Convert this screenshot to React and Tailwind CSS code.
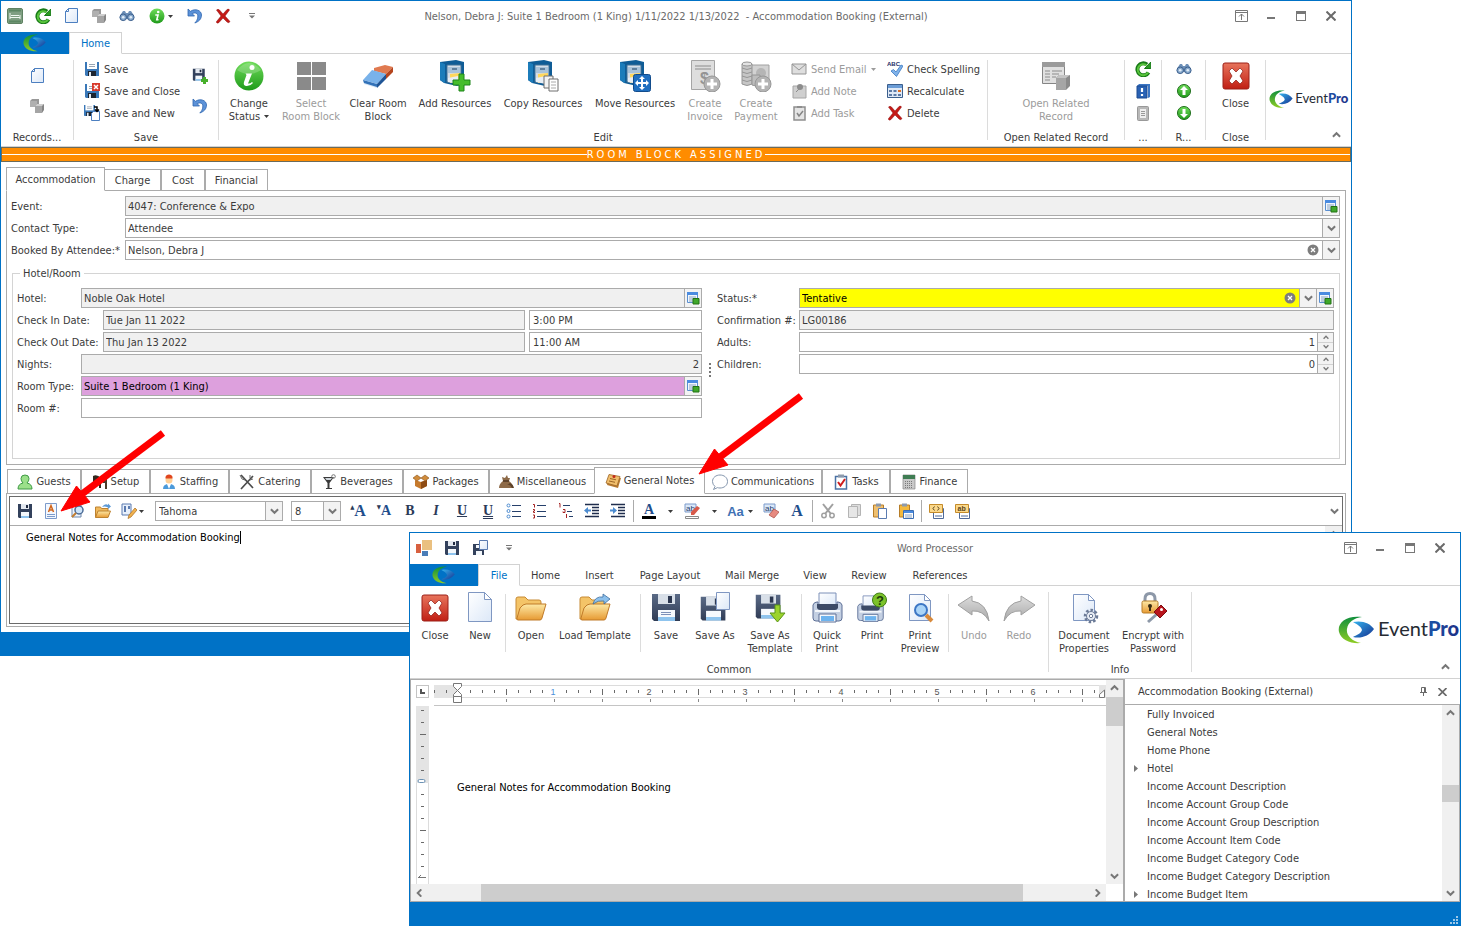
import clsx from 'clsx';

// Shared gradients, referenced by the icons below
const Defs = () => (
  <svg width="0" height="0" className="absolute" aria-hidden="true">
    <defs>
      <linearGradient id="gBlue" x1="0" y1="0" x2="1" y2="1">
        <stop offset="0" stopColor="#5fa3e0" />
        <stop offset="1" stopColor="#14508f" />
      </linearGradient>
      <linearGradient id="gGreen" x1="0" y1="0" x2="0" y2="1">
        <stop offset="0" stopColor="#6fdc5a" />
        <stop offset="1" stopColor="#1f9a1a" />
      </linearGradient>
      <linearGradient id="gRed" x1="0" y1="0" x2="0" y2="1">
        <stop offset="0" stopColor="#e8745c" />
        <stop offset="1" stopColor="#c01f14" />
      </linearGradient>
      <linearGradient id="gPage" x1="0" y1="0" x2="1" y2="1">
        <stop offset="0" stopColor="#ffffff" />
        <stop offset="1" stopColor="#dce8f8" />
      </linearGradient>
      <linearGradient id="gFolder" x1="0" y1="0" x2="0" y2="1">
        <stop offset="0" stopColor="#fde9a6" />
        <stop offset="1" stopColor="#e79a33" />
      </linearGradient>
      <linearGradient id="gDark" x1="0" y1="0" x2="0" y2="1">
        <stop offset="0" stopColor="#5a6a86" />
        <stop offset="1" stopColor="#303c55" />
      </linearGradient>
      <linearGradient id="gGray" x1="0" y1="0" x2="0" y2="1">
        <stop offset="0" stopColor="#dcdcdc" />
        <stop offset="1" stopColor="#a8a8a8" />
      </linearGradient>
      <linearGradient id="gSwoosh" x1="0" y1="0" x2="0" y2="1">
        <stop offset="0" stopColor="#0f8f3c" />
        <stop offset="1" stopColor="#8fcc24" />
      </linearGradient>
      <linearGradient id="gEye" x1="0" y1="0" x2="1" y2="1">
        <stop offset="0" stopColor="#35b3ee" />
        <stop offset="1" stopColor="#15308f" />
      </linearGradient>
      <linearGradient id="gPro" x1="0" y1="0" x2="1" y2="0">
        <stop offset="0" stopColor="#1f8fdc" />
        <stop offset="1" stopColor="#1c2f86" />
      </linearGradient>
    </defs>
  </svg>
);

const Svg = ({ size = 16, box = 16, children }) => (
  <svg width={size} height={size} viewBox={`0 0 ${box} ${box}`} fill="none" className="shrink-0" aria-hidden="true">
    {children}
  </svg>
);

const cabinet = (
  <>
    <path d="M1 2l16-2 8 2v22l-7 2L5 23 1 20z" fill="#0f5c96" />
    <path d="M1 2l5 2v19l-5-3z" fill="#1c7cba" />
    <path d="M8 5h14v19l-14-2z" fill="#d5dde6" stroke="#3c6f96" />
    <path d="M9 7h12v6H9z" fill="#a9c3da" />
    <path d="M13 8h5v2h-5z" fill="#5f7f9c" />
    <path d="M11 14l10-1v8l-10 2z" fill="#ffd75c" />
    <path d="M9 18l10-2v8l-10-2z" fill="#e8eef5" />
  </>
);

const disk = (
  <>
    <path d="M2 2h28v27H4l-2-2z" fill="url(#gDark)" />
    <path d="M8 2h17v10H8z" fill="#d8dfe8" />
    <path d="M18 4h4v7h-4z" fill="#2c3750" />
    <path d="M8 18h17v11H8z" fill="#f6f9fd" />
    <path d="M8 25h17v4H8z" fill="#8fc4ee" />
  </>
);

const disk16 = (
  <>
    <path d="M1 1h14v14H2l-1-1z" fill="#33415c" />
    <path d="M4 1h8v5H4z" fill="#e3e8ef" />
    <path d="M9 2h2v3H9z" fill="#202a40" />
    <path d="M4 9h8v6H4z" fill="#f4f8fc" />
    <path d="M4 13h8v2H4z" fill="#8fc4ee" />
  </>
);

const blueDisk = (
  <>
    <path d="M1 1h14v14H2l-1-1z" fill="#3a78b8" />
    <path d="M3 1h10v7H3z" fill="#fff" />
    <path d="M5 3.500h6M5 5.500h6" stroke="#9aa6b4" />
    <path d="M4 10h8v5H4z" fill="#1d2530" />
    <path d="M5 11h2v4H5z" fill="#e3eaf2" />
  </>
);

const printer = (
  <>
    <path d="M8 1h17v13H8z" fill="url(#gPage)" stroke="#7c90b8" />
    <path d="M2 13q1-3 4-3h1v4h19v-4h1q3 0 4 3v13q0 3-3 3H5q-3 0-3-3z" fill="#c3cfe2" stroke="#5c6f96" />
    <path d="M6 12h21v4q-1 2-3 2H9q-2 0-3-2z" fill="#3c4a66" />
    <path d="M4 19h25" stroke="#f4f7fb" strokeWidth="2" />
    <path d="M8 22h17v8H8z" fill="#f3f7fc" stroke="#5c6f96" />
    <path d="M10 24h13v5H10z" fill="#6db3ee" />
  </>
);

const folder32 = (
  <>
    <path d="M1 7q0-2 2-2h7l3 3h11q2 0 2 2v17H1z" fill="#f4c468" stroke="#c78a34" />
    <path d="M8 13l3-1h20l-4 14q-.5 2-2 2H3q-1.500 0-1-2l3-10z" fill="url(#gFolder)" stroke="#c07a28" />
  </>
);

const invoiceBadge = (
  <>
    <circle cx="23" cy="24" r="8" fill="#b4b4b4" stroke="#989898" />
    <path d="M23 19v10M18 24h10" stroke="#fff" strokeWidth="3" />
  </>
);

const ICONS = {
  rooms: (
    <>
      <rect x=".5" y=".5" width="15" height="15" rx="1.500" fill="#7f9f82" stroke="#5f8263" />
      <path d="M2 2.500h12M2 13.500h12" stroke="#5c8763" strokeWidth="2" />
      <path d="M3 5v6M3 9.500h10M13 7v4M4 7.500h8" stroke="#f0f8f0" />
    </>
  ),
  refresh: (
    <>
      <path d="M13.500 11.500A6 6 0 1 1 12 3.500" stroke="#177a17" strokeWidth="4" />
      <path d="M13 11.500A5.500 5.500 0 1 1 11.500 4.300" stroke="#58c33c" strokeWidth="2" />
      <path d="M9.500 7.500h6.300V1z" fill="#2b9a22" stroke="#177a17" />
    </>
  ),
  page: (
    <>
      <path d="M5.500.5h9v14h-12v-11z" fill="url(#gPage)" stroke="#4c7fc0" />
      <path d="M2.500 3.500h3v-3" stroke="#4c7fc0" />
    </>
  ),
  cubes: (
    <>
      <path d="M1 3l2-2h7v6l-2 2H1z" fill="#989898" />
      <path d="M1 3h7v6H1z" fill="#b0b0b0" />
      <path d="M6 8l2-2h7v6l-2 3H6z" fill="#858585" />
      <path d="M6 8h7v7H6z" fill="#a5a5a5" />
      <path d="M6 8l2-2h7l-2 2z" fill="#cfcfcf" />
    </>
  ),
  binoculars: (
    <>
      <path d="M2 6l2-3h2l1 2h2l1-2h2l2 3v5H1z" fill="#6d90b8" />
      <circle cx="4.200" cy="9.300" r="3.300" fill="#88a9cc" stroke="#3b5f8d" />
      <circle cx="11.800" cy="9.300" r="3.300" fill="#88a9cc" stroke="#3b5f8d" />
      <circle cx="4.200" cy="9.300" r="1.300" fill="#e3eef8" />
      <circle cx="11.800" cy="9.300" r="1.300" fill="#e3eef8" />
    </>
  ),
  info: (
    <>
      <circle cx="8" cy="8" r="7.500" fill="url(#gGreen)" />
      <circle cx="9.200" cy="4" r="1.300" fill="#fff" />
      <path d="M6.300 7H9l-1.200 4.800H9.500" stroke="#fff" strokeWidth="1.600" />
    </>
  ),
  undo: <path d="M1 1v7h6.500L5.200 5.700c3-1.700 6-.5 5.600 3.300-.2 2.500-1.500 4.500-3 6C12 13.500 14.500 11 14.500 7c0-4.500-6-7-11-3.700z" fill="#5c92d8" stroke="#2f66b0" strokeWidth=".8" />,
  cross: <path d="M1.500 2q1.500-1.500 3 0L8 6l4-4.500q2-1 2.500.5L10 8l5 5.500q-1 2-3 .5L8 10l-4 4.500q-2 1.500-2.800-.5L6 8z" fill="#c41a16" stroke="#8c0d0d" strokeWidth=".5" />,
  save: blueDisk,
  saveClose: (
    <>
      {blueDisk}
      <path d="M8 0h8v8H8z" fill="#d83a2c" />
      <path d="M10 2l4 4M14 2l-4 4" stroke="#fff" strokeWidth="1.500" />
    </>
  ),
  saveNew: (
    <>
      <g transform="translate(-1 -1) scale(.8)">{blueDisk}</g>
      <path d="M9.500 6.500h6v9h-8v-7z" fill="#fff" stroke="#4c7fc0" />
      <path d="M10 2h3v4M11 4.500l2 2 2-2" stroke="#000" strokeWidth="1.500" />
    </>
  ),
  savePlus: (
    <>
      <g transform="scale(.85)">{disk16}</g>
      <path d="M12.500 9v7M9 12.500h7" stroke="#47b02b" strokeWidth="3" />
    </>
  ),
  mail: (
    <>
      <path d="M1 3h14v10H1z" fill="#dedede" stroke="#959595" />
      <path d="M1 3l7 6 7-6" stroke="#959595" />
    </>
  ),
  addNote: (
    <>
      <path d="M2 3h13v12H2z" fill="#cfcfcf" stroke="#a5a5a5" />
      <circle cx="9" cy="4" r="3" fill="#8c8c8c" />
      <path d="M8 6L5 9" stroke="#8c8c8c" />
    </>
  ),
  addTask: (
    <>
      <path d="M3 2h11v13H3z" fill="#e4e4e4" stroke="#8e8e8e" strokeWidth="1.500" />
      <path d="M6 1h5v2H6z" fill="#8e8e8e" />
      <path d="M6 8l2 3 4-5" stroke="#858585" strokeWidth="1.500" />
    </>
  ),
  spelling: (
    <>
      <path d="M4 10l2.500-1.500L9 11l5-7 2 1-6.500 10.500z" fill="#7fb2ea" stroke="#3c78c0" strokeWidth=".8" />
      <text x="0" y="5" fill="#1c2c66" fontSize="6" fontWeight="700" fontFamily="Liberation Sans, sans-serif">ABC</text>
    </>
  ),
  calc: (
    <>
      <path d="M.5 1.500h15v13H.5z" fill="#dfe9f6" stroke="#3b5f8d" />
      <path d="M1 2h14v3H1z" fill="#6b9cd6" />
      <path d="M2 7h3v2H2zM6.500 7h3v2h-3zM2 11h3v2H2zM6.500 11h3v2h-3zM11 11h3v2h-3z" fill="#5d7aa5" />
      <path d="M11 7h3v2h-3z" fill="#e06c1f" />
    </>
  ),
  book: (
    <>
      <path d="M4 1h11v13l-2 1V3H2z" fill="#3c76c4" />
      <path d="M2 3h10v12H2z" fill="#2a62b4" stroke="#1c4a90" />
      <path d="M7 5v4M7 11v2" stroke="#fff" strokeWidth="2.200" />
    </>
  ),
  clipboard: (
    <>
      <rect x="2.500" y="1.500" width="11" height="14" rx="1" fill="#b8b8b8" stroke="#999" />
      <path d="M5 4h6v9H5z" fill="#eee" />
      <path d="M6 6.500h4M6 8.500h4M6 10.500h4" stroke="#999" />
    </>
  ),
  up: (
    <>
      <circle cx="8" cy="8" r="6.500" fill="url(#gGreen)" stroke="#1d6d1a" />
      <path d="M8 3l4 4H9.500v5h-3V7H4z" fill="#fff" />
    </>
  ),
  down: (
    <>
      <circle cx="8" cy="8" r="6.500" fill="url(#gGreen)" stroke="#1d6d1a" />
      <path d="M8 13L4 9h2.500V4h3v5H12z" fill="#fff" />
    </>
  ),
  lookup: (
    <>
      <path d="M2.500 2.500h10v10h-10z" fill="#f1f6fc" stroke="#5a8fd0" />
      <path d="M2 2h11v3H2z" fill="#4a8be0" />
      <path d="M4 7h7M4 9h5M4 11h4" stroke="#8ba4c2" />
      <path d="M8 8.500h6v5.500H8z" fill="#3fa82a" stroke="#227214" />
    </>
  ),
  guests: <path d="M1 15q0-5 5-6-2-2-2-4.500Q4 1 8 1t4 3.500Q12 7 10 9q5 1 5 6z" fill="#9be08a" stroke="#3f9a45" />,
  setup: (
    <>
      <path d="M1 2q4-2 8 2v10H7V9H3v5H1z" fill="#33291f" />
      <path d="M11 4h4v11h-2V9h-2z" fill="#4b3b2b" />
    </>
  ),
  staffing: (
    <>
      <path d="M2 15q0-5 6-5t6 5z" fill="#4c9ada" />
      <path d="M6 10h4l-2 5z" fill="#fff" />
      <circle cx="8" cy="6" r="3.500" fill="#ffcf94" />
      <path d="M4.500 4.500V3Q5 .5 8 .5T11.500 3v1.500z" fill="#e0461e" />
    </>
  ),
  catering: (
    <>
      <path d="M2 15L14 2M2 1l12 13" stroke="#4b4b4b" strokeWidth="1.700" />
      <path d="M1 1l2 4 3 1M11 1v3M14 5l-3 1" stroke="#6b6b6b" />
    </>
  ),
  beverages: (
    <>
      <path d="M2 3h11L8.500 9v5H11v1H5v-1h1.500V9z" fill="#3a3a3a" />
      <path d="M4 4h7L9.500 6h-4z" fill="#cfd6dc" />
      <circle cx="12.500" cy="2.500" r="1.800" stroke="#777" />
    </>
  ),
  packages: (
    <>
      <path d="M2 6l6 2 6-2v6l-6 3-6-3z" fill="#c67a2c" />
      <path d="M8 8v7l6-3V6z" fill="#8e4c14" />
      <path d="M0 4l4-3 4 3-4 3zM8 4l4-3 4 3-4 3z" fill="#d08c3c" stroke="#8a5018" strokeWidth=".6" />
    </>
  ),
  misc: (
    <>
      <path d="M1 14q0-4 4-7l-1-4 3 1 2-3 1 3 2 0-1 3q4 3 4 7z" fill="#8d6a48" />
      <path d="M5 7h6" stroke="#4f3723" strokeWidth="1.500" />
      <path d="M9 11q3-1 5 3h2q-1-4-4-5z" fill="#5c4128" />
    </>
  ),
  notes: (
    <>
      <path d="M4 3l12 2-3 10-11-3z" fill="#b87a30" />
      <path d="M4 1.500l11 2-3 9.500-11-3z" fill="#f0bd6b" stroke="#9c6524" strokeWidth=".8" />
      <path d="M5 5.500l6 1.300M4 8l6 1.300" stroke="#9c6524" />
      <circle cx="9" cy="3.500" r="1.500" fill="#c22a1c" />
    </>
  ),
  comms: <path d="M8 1c4 0 7.500 2.500 7.500 6.500S12 14 8 14q-1.500 0-2.500-.4L1.500 15.500 3 12.500Q.5 10.500.5 7.500C.5 3.500 4 1 8 1z" fill="#fff" stroke="#8496ad" />,
  tasks: (
    <>
      <path d="M2.500 2.500h11v12.500h-11z" fill="#fff" stroke="#4a72a4" strokeWidth="1.500" />
      <path d="M5 .5h6v3H5z" fill="#8d9aac" />
      <path d="M5 8l2.500 3.500L12 5" stroke="#cf1d1d" strokeWidth="2" />
    </>
  ),
  finance: (
    <>
      <path d="M2 1h12v14H2z" fill="#c9c9c9" stroke="#888" strokeWidth=".7" />
      <path d="M2 1h12v4H2z" fill="#3f7d53" />
      <path d="M4 7.500h8M4 9.500h8M4 11.500h8M4 13.500h8" stroke="#7a7a7a" strokeDasharray="1 1" />
    </>
  ),
  disk: disk16,
  docA: (
    <>
      <path d="M2.500.5h11v15h-11z" fill="#f3f8ff" stroke="#7c9bcb" />
      <path d="M5.500 9L8 2.500 10.500 9M6.500 7h3" stroke="#d0651c" strokeWidth="1.500" />
      <path d="M4 11.500h8M4 13.500h8" stroke="#7c9bcb" />
    </>
  ),
  preview: (
    <>
      <path d="M3 1h9v13H3z" fill="#eef4fc" stroke="#6f88ad" />
      <circle cx="10" cy="7" r="4" fill="#cfe4f8" stroke="#4b6b96" strokeWidth="1.500" />
      <path d="M7 10l-4 4" stroke="#c27c2f" strokeWidth="2" />
    </>
  ),
  openFile: (
    <>
      <path d="M.5 4h5l1 1.500H13V14H.5z" fill="#f0b95c" stroke="#bd8230" />
      <path d="M3 8h12.500L13 14.500H.5z" fill="url(#gFolder)" stroke="#bd8230" />
      <path d="M7 4q3-4 6-2V.5l3 3-3 2.500V4.500Q10 3 7 4z" fill="#5d9ad6" />
    </>
  ),
  edit: (
    <>
      <path d="M1 1h9v11H1z" fill="#e8f0fb" stroke="#5b7bb0" />
      <path d="M3 3h2v6H3zM7 3h2v3H7z" fill="#5b7bb0" />
      <path d="M14 5l2 2-6 7-3 1.500 1-3.500z" fill="#f1b14e" stroke="#a86c1c" strokeWidth=".7" />
    </>
  ),
  bullets: (
    <>
      <path d="M6 2.500h9M6 8.500h9M6 13.500h9" stroke="#26406b" />
      <circle cx="2.500" cy="2.500" r="1.500" stroke="#4c8bd0" />
      <circle cx="2.500" cy="8" r="1.500" stroke="#4c8bd0" />
      <circle cx="2.500" cy="13.500" r="1.500" stroke="#4c8bd0" />
    </>
  ),
  numbers: (
    <>
      <path d="M5 2.500h9M5 8.500h9M5 13.500h9" stroke="#26406b" />
      <path d="M1 1.500h1.500v3M1 6.500h1.500v1.500H1.500v1.500H3M1 12h1.500v3H1" stroke="#a52222" />
    </>
  ),
  multilevel: (
    <>
      <path d="M5 2.500h7M9 8.500h5M11 13.500h4" stroke="#26406b" />
      <path d="M1 .5h1v4M5 6.500h2v3H5V8.500M8.500 11v4" stroke="#a52222" />
    </>
  ),
  outdent: (
    <>
      <path d="M1 1.500h14M8 4.500h7M8 7.500h7M8 10.500h7M1 13.500h14" stroke="#1f2d4d" strokeWidth="1.500" />
      <path d="M0 7.500l4-3.500v2.500h3v2H4V11z" fill="#4c8bd0" />
    </>
  ),
  indent: (
    <>
      <path d="M1 1.500h14M8 4.500h7M8 7.500h7M8 10.500h7M1 13.500h14" stroke="#1f2d4d" strokeWidth="1.500" />
      <path d="M7 7.500L3 4v2.500H0v2h3V11z" fill="#4c8bd0" />
    </>
  ),
  highlight: (
    <>
      <path d="M1 1h11v8H1z" fill="#dbe8f8" stroke="#7c9bcb" />
      <text x="2" y="8" fill="#26406b" fontSize="8" fontFamily="Liberation Sans, sans-serif">ab</text>
      <path d="M13 3l3 2-6 7-3 0 0-3z" fill="#d85a4a" />
      <path d="M1.500 13.500h13v2h-13z" fill="#fff" stroke="#888" />
    </>
  ),
  clearFormat: (
    <>
      <path d="M1 1h11v8H1z" fill="#dbe8f8" stroke="#7c9bcb" />
      <text x="2" y="8" fill="#26406b" fontSize="8" fontFamily="Liberation Sans, sans-serif">ab</text>
      <path d="M11 6l5 3-5 6-5-3z" fill="#e78a80" stroke="#a84c44" strokeWidth=".7" />
    </>
  ),
  cut: (
    <>
      <path d="M3 1l8 10M13 1L5 11" stroke="#a0a0a0" strokeWidth="2" />
      <circle cx="4" cy="12.500" r="2.200" stroke="#a0a0a0" strokeWidth="1.500" />
      <circle cx="12" cy="12.500" r="2.200" stroke="#a0a0a0" strokeWidth="1.500" />
    </>
  ),
  copy: (
    <>
      <path d="M5.500 1.500h9v11h-9z" fill="#ddd" stroke="#b4b4b4" />
      <path d="M2.500 3.500h9v11h-9z" fill="#e6e6e6" stroke="#b4b4b4" />
    </>
  ),
  paste: (
    <>
      <path d="M1.500 2h10v12h-10z" fill="#efc070" stroke="#b67d28" />
      <path d="M4 .5h5v3H4z" fill="#8d9aac" />
      <path d="M6.500 5.500h8v10h-8z" fill="#fff" stroke="#5b7bb0" />
    </>
  ),
  pasteSpecial: (
    <>
      <path d="M1.500 2h10v12h-10z" fill="#f4b93c" stroke="#b67d28" />
      <path d="M4 .5h5v3H4z" fill="#8d9aac" />
      <path d="M5.500 7.500h10v8h-10z" fill="#fff" stroke="#3c6fb4" />
      <path d="M6 8h9v2H6z" fill="#4a8be0" />
      <path d="M7 12h7M7 14h7" stroke="#8ba4c2" />
    </>
  ),
  fieldCode: (
    <>
      <path d="M4.500 5.500h10v10h-10z" fill="#fff" stroke="#4f6a9a" />
      <path d="M6 13h7" stroke="#4f6a9a" />
      <path d="M.5 1.500h13v8H.5z" fill="#fbd88a" stroke="#c48b2a" />
      <path d="M5.500 3.500L4 5.500l1.500 2M8.500 3.500l1.500 2-1.500 2" stroke="#5a4520" />
    </>
  ),
  fieldText: (
    <>
      <path d="M4.500 5.500h10v10h-10z" fill="#fff" stroke="#4f6a9a" />
      <path d="M6 13h7" stroke="#4f6a9a" />
      <path d="M.5 1.500h13v8H.5z" fill="#fbd88a" stroke="#c48b2a" />
      <text x="2.500" y="8" fill="#5a4520" fontSize="7" fontWeight="700" fontFamily="Liberation Sans, sans-serif">ab</text>
    </>
  ),
  squares: (
    <>
      <path d="M0 4h5v9H0z" fill="#d8603f" />
      <path d="M6 0h10v10H6z" fill="#eac080" />
      <path d="M6 11h6v5H6z" fill="#4a7db8" />
    </>
  ),
  diskPage: (
    <>
      <path d="M1 4h11v11H1z" fill="#33415c" />
      <path d="M4 5h3v3H4zM4 11h6v4H4z" fill="#f4f8fc" />
      <path d="M7.500.5h8v9h-8z" fill="url(#gPage)" stroke="#5b7bb0" />
    </>
  ),
};

const BIG_ICONS = {
  info: (
    <>
      <circle cx="16" cy="16" r="14.500" fill="url(#gGreen)" />
      <path d="M4 10q12-14 24 0-12 8-24 0z" fill="#fff" opacity=".2" />
      <circle cx="19" cy="7.500" r="2.500" fill="#fff" />
      <path d="M12.500 13.500H19l-4 10q2 .5 4-1.500l1 1q-3 3.500-7 3-3-.5-2-4l2.500-7z" fill="#fff" />
    </>
  ),
  blocks: <path d="M2 2h14v13H2zM17 2h14v13H17zM2 17h14v13H2zM17 17h14v13H17z" fill="#8a8a8a" />,
  eraser: (
    <>
      <path d="M12 8L23 5l8 2-7 7-12-3z" fill="#e07a50" />
      <path d="M1 20L10 10l14 4-9 10z" fill="#79b2ea" />
      <path d="M1 20l14 4v4L2 24z" fill="#d5e6f6" />
      <path d="M1 20l14 4v3L2 23z" fill="#3272b8" />
      <path d="M15 24l9-10v5l-9 9z" fill="#1f5596" />
      <path d="M24 14l7-7v5l-7 7z" fill="#b5451e" />
    </>
  ),
  addResources: (
    <>
      {cabinet}
      <path d="M20 14h5v6h6v5h-6v6h-5v-6h-6v-5h6z" fill="#46bd2c" stroke="#1f861a" />
    </>
  ),
  copyResources: (
    <>
      {cabinet}
      <path d="M17 16h9v12h-9z" fill="#f3f3f3" stroke="#6f6f6f" />
      <path d="M22 19h9v12h-9z" fill="#fff" stroke="#6f6f6f" />
      <path d="M24 22h5M24 25h5M24 28h5" stroke="#aaa" />
    </>
  ),
  moveResources: (
    <>
      {cabinet}
      <rect x="14.500" y="14.500" width="17" height="17" rx="2" fill="#1f6fc0" stroke="#124c8c" />
      <path d="M23 16l3 3h-2v3h3v-2l3 3-3 3v-2h-3v3h2l-3 3-3-3h2v-3h-3v2l-3-3 3-3v2h3v-3h-2z" fill="#fff" />
    </>
  ),
  invoice: (
    <>
      <path d="M2.500.5h23v29h-23z" fill="#dedede" stroke="#a5a5a5" />
      <path d="M6 6h16M6 9h16" stroke="#8c8c8c" />
      <text x="11" y="24" fill="#949494" fontSize="16" fontWeight="700" fontFamily="Liberation Sans, sans-serif">$</text>
      {invoiceBadge}
    </>
  ),
  payment: (
    <>
      <path d="M10 5h19v16H10z" fill="#d2d2d2" stroke="#a0a0a0" />
      <circle cx="21" cy="13" r="5" fill="#b5b5b5" />
      <path d="M2 4v20q5 3 10 0V4z" fill="#c6c6c6" stroke="#969696" />
      <path d="M2 8q5 3 10 0M2 12q5 3 10 0M2 16q5 3 10 0M2 20q5 3 10 0" stroke="#969696" />
      <ellipse cx="7" cy="4" rx="5" ry="2" fill="#e2e2e2" stroke="#969696" />
      <path d="M12 15v10q4 2 8 0V15z" fill="#bdbdbd" stroke="#969696" />
      {invoiceBadge}
    </>
  ),
  related: (
    <>
      <path d="M2.500 2.500h22v21h-22z" fill="#e0e0e0" stroke="#858585" />
      <path d="M2 2h23v5H2z" fill="#9b9b9b" />
      <path d="M5 11h5M12 11h10M5 14h5M12 14h7M5 17h5M12 17h4M5 20h5" stroke="#8c8c8c" />
      <path d="M16 18l3-3h11v11l-4 4H16z" fill="#8a8a8a" />
      <path d="M16 18h10v12H16z" fill="#a5a5a5" />
      <path d="M16 18l3-3h11l-4 3z" fill="#c4c4c4" />
    </>
  ),
  close: (
    <>
      <rect x="3" y="3" width="26" height="26" rx="2" fill="url(#gRed)" stroke="#9c2018" />
      <path d="M9 11l3-3 4 4 4-4 3 3-3 5 3 5-3 3-4-4-4 4-3-3 3-5z" fill="#fff" stroke="#8c1a12" strokeWidth=".7" />
    </>
  ),
  newDoc: (
    <>
      <path d="M4.500.5h16l7 7v22h-23z" fill="url(#gPage)" stroke="#7f97c2" />
      <path d="M20.500.5v7h7z" fill="#fff" stroke="#7f97c2" />
    </>
  ),
  folder: folder32,
  loadTemplate: (
    <>
      {folder32}
      <path d="M14 12q2-8 10-7V2l7 5-6 5V9q-6-1-11 3z" fill="#8cc0ec" stroke="#3d6d9e" strokeWidth=".8" />
    </>
  ),
  save: (
    <>
      {disk}
      <path d="M11 20.500h10M11 22.500h10" stroke="#7c90b8" />
    </>
  ),
  saveAs: (
    <>
      <g transform="translate(0 3) scale(.88)">{disk}</g>
      <path d="M17.500.5h13v17h-13z" fill="url(#gPage)" stroke="#7f97c2" />
    </>
  ),
  saveTemplate: (
    <>
      <g transform="translate(0 1) scale(.88)">{disk}</g>
      <path d="M21 13h5v8h5l-7.500 9L16 21h5z" fill="#9bd32c" stroke="#5b951a" />
    </>
  ),
  printer,
  print: (
    <>
      <g transform="translate(0 3) scale(.88)">{printer}</g>
      <circle cx="23.500" cy="8" r="7" fill="#7cc22a" stroke="#3f7d14" />
      <text x="20" y="13" fill="#1f3d08" fontSize="13" fontWeight="700" fontFamily="Liberation Sans, sans-serif">?</text>
    </>
  ),
  printPreview: (
    <>
      <path d="M5.500 2.500h15l6 6v20h-21z" fill="url(#gPage)" stroke="#7f97c2" />
      <path d="M20.500 2.500v6h6z" fill="#fff" stroke="#7f97c2" />
      <circle cx="17" cy="18" r="6" fill="#a9d4f8" stroke="#3c76c4" strokeWidth="2" />
      <path d="M22 23l6 6" stroke="#d88a3c" strokeWidth="4" />
    </>
  ),
  undo: <path d="M0 13L14 4v5q15 2 17 20-6-11-17-10v4z" fill="url(#gGray)" stroke="#a0a0a0" />,
  redo: <path d="M32 13L18 4v5Q3 11 1 29q6-11 17-10v4z" fill="url(#gGray)" stroke="#a0a0a0" />,
  docProps: (
    <>
      <path d="M5.500 2.500h15l6 6v20h-21z" fill="url(#gPage)" stroke="#7f97c2" />
      <path d="M20.500 2.500v6h6z" fill="#fff" stroke="#7f97c2" />
      <circle cx="23" cy="24" r="6" stroke="#6b7a96" strokeWidth="2.500" strokeDasharray="2.500 2" />
      <circle cx="23" cy="24" r="4.500" fill="#e8edf5" stroke="#6b7a96" />
      <circle cx="23" cy="24" r="1.700" fill="#fff" stroke="#6b7a96" />
    </>
  ),
  encrypt: (
    <>
      <path d="M8 10V7q0-5.500 5-5.500T18 7v3" stroke="#8d98a8" strokeWidth="3" />
      <rect x="5" y="9" width="16" height="12" rx="1.500" fill="url(#gFolder)" stroke="#b67d28" />
      <circle cx="13" cy="14" r="2" fill="#3a2c14" />
      <path d="M12 14h2v5h-2z" fill="#3a2c14" />
      <path d="M20 22l-9 8" stroke="#8d98a8" strokeWidth="3" />
      <path d="M17 20l7-7 6 6-7 7z" fill="#b8141c" stroke="#7d0c10" />
      <circle cx="24.500" cy="17.500" r="1.500" fill="#fff" />
    </>
  ),
};

const Icon = ({ name }) => <Svg>{ICONS[name]}</Svg>;
const BigIcon = ({ name }) => <Svg size={32} box={32}>{BIG_ICONS[name]}</Svg>;

const CHEVRONS = { down: 'M1 2l4 4 4-4', up: 'M1 6l4-4 4 4', left: 'M7 0L3 4l4 4', right: 'M3 0l4 4-4 4' };

const Chevron = ({ dir = 'down', small = false }) => (
  <svg width={small ? 6 : 9} height={small ? 5 : 8} viewBox="0 0 10 8" fill="none" className="shrink-0 text-[#777]" aria-hidden="true">
    <path d={CHEVRONS[dir]} stroke="currentColor" strokeWidth="2.200" />
  </svg>
);

const Caret = () => (
  <svg width="5" height="3" viewBox="0 0 5 3" className="shrink-0 fill-current" aria-hidden="true">
    <path d="M0 0h5L2.500 3z" />
  </svg>
);

const CustomizeCaret = () => (
  <svg width="6" height="6" viewBox="0 0 6 6" className="shrink-0 fill-[#777]" aria-hidden="true">
    <path d="M0 0h6v1H0zM0 2.500h6l-3 3z" />
  </svg>
);

const Swoosh = () => (
  <>
    <path d="M24 1C8-1-1 7 1 16c2 8 12 12 22 11C13 25 8 19 9 13c1-7 7-11 15-12z" fill="url(#gSwoosh)" />
    <path d="M15 6c9-2 17 1 21 7-5 7-13 10-21 8 3-2 8-3 9-7-1-4-6-6-9-8z" fill="url(#gEye)" />
  </>
);

const Logo = ({ large = false }) => (
  <svg width={large ? 122 : 82} height={large ? 29 : 19} viewBox="0 0 122 29" className="shrink-0" role="img" aria-label="EventPro">
    <Swoosh />
    <text x="40" y="20" fontSize="20" fontFamily="Lato, sans-serif" fill="#262b33">
      Event
      <tspan fontWeight="900" fill="url(#gPro)">Pro</tspan>
    </text>
  </svg>
);

const WindowControls = () => (
  <div className="flex justify-end pr-[5px]">
    <button type="button" aria-label="Ribbon display options" className="flex h-5 w-[30px] items-center justify-center">
      <svg width="13" height="12" viewBox="0 0 13 12" fill="none" stroke="#777" aria-hidden="true">
        <path d="M.5.5h12v11H.5zM.5 2.500h12M6.500 10V4M4 6.500L6.500 4 9 6.500" />
      </svg>
    </button>
    <button type="button" aria-label="Minimize" className="flex h-5 w-[30px] items-center justify-center">
      <span className="mt-[3px] h-[2px] w-2 bg-[#777]"></span>
    </button>
    <button type="button" aria-label="Maximize" className="flex h-5 w-[30px] items-center justify-center">
      <span className="h-[10px] w-[10px] border border-t-[3px] border-[#777]"></span>
    </button>
    <button type="button" aria-label="Close window" className="flex h-5 w-[30px] items-center justify-center">
      <svg width="10" height="10" viewBox="0 0 10 10" stroke="#6a6a6a" strokeWidth="2" aria-hidden="true">
        <path d="M.5.5l9 9M9.500.5l-9 9" />
      </svg>
    </button>
  </div>
);

const TitleBar = ({ title, children }) => (
  <div className="mb-px grid h-[30px] grid-cols-[1fr_auto_1fr] items-center">
    <div className="flex items-center">{children}</div>
    <h1 className="whitespace-pre text-[#6a6a6a]">{title}</h1>
    <WindowControls />
  </div>
);

const QuickButton = ({ name, label, caret = false }) => (
  <button type="button" aria-label={label} className={clsx('flex h-6 items-center justify-center gap-[3px]', caret ? 'w-10' : 'w-7')}>
    <Icon name={name} />
    {caret && <Caret />}
  </button>
);

const RibbonTabs = ({ tabs }) => (
  <div className="flex h-[22px]">
    <button type="button" aria-label="Application menu" className="flex w-[68px] items-center justify-center bg-[#0072c6]">
      <svg width="24" height="18" viewBox="0 0 38 28" aria-hidden="true">
        <Swoosh />
      </svg>
    </button>
    <div role="tablist" className="flex flex-1 border-b border-[#d2d2d2]">
      {tabs.map((tab, i) => (
        <button
          key={tab.name}
          type="button"
          role="tab"
          aria-selected={i === 0}
          className={clsx(
            'text-center',
            tab.width,
            i === 0 ? '-mb-px border border-b-white border-[#d2d2d2] bg-white text-[#0072c6]' : 'mt-px'
          )}
        >
          {tab.name}
        </button>
      ))}
    </div>
  </div>
);

const BigButton = ({ icon, label, width, disabled = false, caret = false }) => (
  <button
    type="button"
    disabled={disabled}
    className={clsx('flex shrink-0 flex-col items-center gap-[5px] whitespace-nowrap', width, disabled && 'text-[#9b9b9b]')}
  >
    <BigIcon name={icon} />
    <span className="flex flex-col items-center">
      {label.map((line, i) => (
        <span key={line} className="flex items-center gap-1">
          {line}
          {caret && i === label.length - 1 && <Caret />}
        </span>
      ))}
    </span>
  </button>
);

const SmallButton = ({ icon, label, disabled = false, caret = false }) => (
  <button type="button" disabled={disabled} className={clsx('flex h-[22px] items-center gap-1 whitespace-nowrap', disabled && 'text-[#9b9b9b]')}>
    <Icon name={icon} />
    {label}
    {caret && <Caret />}
  </button>
);

const IconButton = ({ icon, label, height = 'h-[22px]' }) => (
  <button type="button" aria-label={label} className={clsx('flex w-[22px] items-center justify-center', height)}>
    <Icon name={icon} />
  </button>
);

const Divider = () => <span className="h-[80px] w-px shrink-0 bg-[#dcdcdc]"></span>;
const ShortDivider = () => <span className="mx-[3px] mt-[2px] h-[58px] w-px shrink-0 bg-[#dcdcdc]"></span>;

const RibbonGroup = ({ caption, className, bodyClass, children }) => (
  <div className={clsx('flex shrink-0 flex-col items-center', className)}>
    <div className={clsx('flex h-[71px]', bodyClass)}>{children}</div>
    <span className="whitespace-nowrap">{caption}</span>
  </div>
);

const MainRibbon = () => (
  <div className="flex h-[93px] border-b border-[#d2d2d2] pt-[6px]">
    <RibbonGroup caption="Records..." className="w-[72px]">
      <div className="flex flex-col pt-px">
        <IconButton icon="page" label="New record" height="h-[30px]" />
        <IconButton icon="cubes" label="Related records" height="h-[30px]" />
      </div>
    </RibbonGroup>
    <Divider />
    <RibbonGroup caption="Save" className="w-[144px]" bodyClass="w-full pl-[10px]">
      <div className="-mt-[2px] flex w-[105px] flex-col">
        <SmallButton icon="save" label="Save" />
        <SmallButton icon="saveClose" label="Save and Close" />
        <SmallButton icon="saveNew" label="Save and New" />
      </div>
      <div className="flex flex-col pt-px">
        <IconButton icon="savePlus" label="Save and add" height="h-[30px]" />
        <IconButton icon="undo" label="Undo changes" height="h-[30px]" />
      </div>
    </RibbonGroup>
    <Divider />
    <RibbonGroup caption="Edit" className="w-[768px]" bodyClass="w-full">
      <BigButton icon="info" label={['Change', 'Status']} width="w-[60px]" caret />
      <BigButton icon="blocks" label={['Select', 'Room Block']} width="w-[64px]" disabled />
      <BigButton icon="eraser" label={['Clear Room', 'Block']} width="w-[70px]" />
      <BigButton icon="addResources" label={['Add Resources']} width="w-[84px]" />
      <BigButton icon="copyResources" label={['Copy Resources']} width="w-[92px]" />
      <BigButton icon="moveResources" label={['Move Resources']} width="w-[92px]" />
      <BigButton icon="invoice" label={['Create', 'Invoice']} width="w-[48px]" disabled />
      <BigButton icon="payment" label={['Create', 'Payment']} width="w-[54px]" disabled />
      <div className="-mt-[2px] ml-2 flex w-[96px] flex-col">
        <SmallButton icon="mail" label="Send Email" disabled caret />
        <SmallButton icon="addNote" label="Add Note" disabled />
        <SmallButton icon="addTask" label="Add Task" disabled />
      </div>
      <div className="-mt-[2px] flex flex-col">
        <SmallButton icon="spelling" label="Check Spelling" />
        <SmallButton icon="calc" label="Recalculate" />
        <SmallButton icon="cross" label="Delete" />
      </div>
    </RibbonGroup>
    <Divider />
    <RibbonGroup caption="Open Related Record" className="w-[136px]">
      <BigButton icon="related" label={['Open Related', 'Record']} width="w-[80px]" disabled />
    </RibbonGroup>
    <Divider />
    <RibbonGroup caption="..." className="w-[36px]">
      <div className="-mt-[2px] flex flex-col">
        <IconButton icon="refresh" label="Refresh" />
        <IconButton icon="book" label="Audit" />
        <IconButton icon="clipboard" label="Clipboard" />
      </div>
    </RibbonGroup>
    <Divider />
    <RibbonGroup caption="R..." className="w-[43px]">
      <div className="-mt-[2px] flex flex-col">
        <IconButton icon="binoculars" label="Find" />
        <IconButton icon="up" label="Previous record" />
        <IconButton icon="down" label="Next record" />
      </div>
    </RibbonGroup>
    <Divider />
    <RibbonGroup caption="Close" className="w-[59px]">
      <BigButton icon="close" label={['Close']} width="w-[50px]" />
    </RibbonGroup>
    <Divider />
    <div className="flex flex-1 flex-col items-end justify-between pb-[7px] pr-px pt-[30px]">
      <Logo />
      <button type="button" aria-label="Collapse ribbon" className="mr-[9px]">
        <Chevron dir="up" />
      </button>
    </div>
  </div>
);

const WordRibbon = () => (
  <div className="flex h-[93px] border-b border-[#d2d2d2] pt-[6px]">
    <RibbonGroup caption="Common" className="w-[638px]" bodyClass="w-full pl-[2px]">
      <BigButton icon="close" label={['Close']} width="w-[46px]" />
      <BigButton icon="newDoc" label={['New']} width="w-[44px]" />
      <ShortDivider />
      <BigButton icon="folder" label={['Open']} width="w-[44px]" />
      <BigButton icon="loadTemplate" label={['Load Template']} width="w-[84px]" />
      <ShortDivider />
      <BigButton icon="save" label={['Save']} width="w-[44px]" />
      <BigButton icon="saveAs" label={['Save As']} width="w-[54px]" />
      <BigButton icon="saveTemplate" label={['Save As', 'Template']} width="w-[56px]" />
      <ShortDivider />
      <BigButton icon="printer" label={['Quick', 'Print']} width="w-[44px]" />
      <BigButton icon="print" label={['Print']} width="w-[46px]" />
      <BigButton icon="printPreview" label={['Print', 'Preview']} width="w-[50px]" />
      <ShortDivider />
      <BigButton icon="undo" label={['Undo']} width="w-[44px]" disabled />
      <BigButton icon="redo" label={['Redo']} width="w-[46px]" disabled />
    </RibbonGroup>
    <Divider />
    <RibbonGroup caption="Info" className="w-[142px]">
      <BigButton icon="docProps" label={['Document', 'Properties']} width="w-[66px]" />
      <BigButton icon="encrypt" label={['Encrypt with', 'Password']} width="w-[72px]" />
    </RibbonGroup>
    <Divider />
    <div className="flex flex-1 flex-col items-end justify-between pb-[7px] pt-6">
      <Logo large />
      <button type="button" aria-label="Collapse ribbon" className="mr-[10px]">
        <Chevron dir="up" />
      </button>
    </div>
  </div>
);

const inputBase = 'h-5 w-full min-w-0 border border-[#ababab] px-[2px] outline-none';
const GRAY = 'bg-[#f0f0f0]';

const Row = ({ id, label, labelWidth, required = false, children }) => (
  <div className="flex items-center">
    <label htmlFor={id} className={clsx('shrink-0 whitespace-nowrap', labelWidth)}>
      {label}
      {required && '*'}
    </label>
    <div className="flex min-w-0 flex-1">{children}</div>
  </div>
);

const AddonButton = ({ label, children }) => (
  <button type="button" aria-label={label} className="flex h-5 w-[17px] shrink-0 items-center justify-center border border-l-0 border-[#ababab] bg-[#f3f3f3]">
    {children}
  </button>
);

const LookupButton = () => (
  <AddonButton label="Open record">
    <Icon name="lookup" />
  </AddonButton>
);

const DropButton = () => (
  <AddonButton label="Show list">
    <Chevron />
  </AddonButton>
);

const ClearButton = () => (
  <button type="button" aria-label="Clear" className="flex h-5 w-[18px] shrink-0 items-center justify-center border-y border-[#ababab]">
    <svg width="12" height="12" viewBox="0 0 12 12" aria-hidden="true">
      <circle cx="6" cy="6" r="5.500" fill="#7d7d7d" />
      <path d="M4 4l4 4M8 4l-4 4" stroke="#fff" strokeWidth="1.300" />
    </svg>
  </button>
);

const NumberField = ({ id, value }) => (
  <>
    <input
      id={id}
      type="number"
      defaultValue={value}
      className={clsx(inputBase, 'text-right [appearance:textfield] [&::-webkit-inner-spin-button]:appearance-none')}
    />
    <div className="flex h-5 w-[16px] shrink-0 flex-col border border-l-0 border-[#ababab] bg-[#f3f3f3]">
      <button type="button" aria-label="Increase" className="flex flex-1 items-center justify-center border-b border-[#d2d2d2]">
        <Chevron dir="up" small />
      </button>
      <button type="button" aria-label="Decrease" className="flex flex-1 items-center justify-center">
        <Chevron small />
      </button>
    </div>
  </>
);

const TABS = [
  { name: 'Accommodation', width: 'w-[99px]' },
  { name: 'Charge', width: 'w-[57px]' },
  { name: 'Cost', width: 'w-[44px]' },
  { name: 'Financial', width: 'w-[63px]' },
];

const DETAIL_TABS = [
  { name: 'Guests', icon: 'guests', width: 'w-[74px]' },
  { name: 'Setup', icon: 'setup', width: 'w-[69px]' },
  { name: 'Staffing', icon: 'staffing', width: 'w-[79px]' },
  { name: 'Catering', icon: 'catering', width: 'w-[82px]' },
  { name: 'Beverages', icon: 'beverages', width: 'w-[92px]' },
  { name: 'Packages', icon: 'packages', width: 'w-[86px]' },
  { name: 'Miscellaneous', icon: 'misc', width: 'w-[106px]' },
  { name: 'General Notes', icon: 'notes', width: 'w-[111px]' },
  { name: 'Communications', icon: 'comms', width: 'w-[118px]' },
  { name: 'Tasks', icon: 'tasks', width: 'w-[68px]' },
  { name: 'Finance', icon: 'finance', width: 'w-[78px]' },
];

const PanelTabs = ({ tabs, active, tall = false }) => (
  <div role="tablist" className="relative -mb-px flex items-end">
    {tabs.map((tab) => {
      const isActive = tab.name === active;
      return (
        <button
          key={tab.name}
          type="button"
          role="tab"
          aria-selected={isActive}
          className={clsx(
            'flex items-center justify-center gap-[3px] whitespace-nowrap border border-[#ababab] bg-white',
            tab.width,
            isActive && 'z-10 border-b-white',
            isActive && (tall ? '-mx-px h-[27px]' : '-mr-px h-[24px]'),
            !isActive && (tall ? 'h-[25px]' : 'h-[22px]')
          )}
        >
          {tab.icon && <Icon name={tab.icon} />}
          {tab.name}
        </button>
      );
    })}
  </div>
);

const HotelRoom = () => (
  <fieldset className="ml-px mt-[7px] min-h-[192px] border border-[#d4d4d4] pl-1 pr-[5px]">
    <legend className="ml-[3px] px-[3px]">Hotel/Room</legend>
    <div className="grid grid-cols-[685fr_617fr] gap-x-[15px] pt-[8px]">
      <div className="relative flex flex-col gap-[2px]">
        <Row id="hotel" label="Hotel:" labelWidth="w-[64px]">
          <input id="hotel" readOnly defaultValue="Noble Oak Hotel" className={clsx(inputBase, GRAY)} />
          <LookupButton />
        </Row>
        <Row id="checkIn" label="Check In Date:" labelWidth="w-[86px]">
          <input id="checkIn" readOnly defaultValue="Tue Jan 11 2022" className={clsx(inputBase, GRAY)} />
          <input aria-label="Check in time" defaultValue="3:00 PM" className="ml-1 h-5 w-[173px] shrink-0 border border-[#ababab] px-[3px] outline-none" />
        </Row>
        <Row id="checkOut" label="Check Out Date:" labelWidth="w-[86px]">
          <input id="checkOut" readOnly defaultValue="Thu Jan 13 2022" className={clsx(inputBase, GRAY)} />
          <input aria-label="Check out time" defaultValue="11:00 AM" className="ml-1 h-5 w-[173px] shrink-0 border border-[#ababab] px-[3px] outline-none" />
        </Row>
        <Row id="nights" label="Nights:" labelWidth="w-[64px]">
          <input id="nights" readOnly defaultValue="2" className={clsx(inputBase, GRAY, 'text-right')} />
        </Row>
        <Row id="roomType" label="Room Type:" labelWidth="w-[64px]">
          <input id="roomType" defaultValue="Suite 1 Bedroom (1 King)" className={clsx(inputBase, 'bg-[#dda0dd] text-black')} />
          <LookupButton />
        </Row>
        <Row id="roomNumber" label="Room #:" labelWidth="w-[64px]">
          <input id="roomNumber" className={inputBase} />
        </Row>
        {/* splitter grip between the two columns */}
        <div className="absolute -right-[9px] top-[75px] flex flex-col gap-[2px]">
          <span className="size-[2px] bg-[#777]"></span>
          <span className="size-[2px] bg-[#777]"></span>
          <span className="size-[2px] bg-[#777]"></span>
          <span className="size-[2px] bg-[#777]"></span>
        </div>
      </div>
      <div className="flex flex-col gap-[2px]">
        <Row id="status" label="Status:" labelWidth="w-[82px]" required>
          <div className="flex flex-1 bg-[#ffff00]">
            <select id="status" className="h-5 w-full appearance-none border border-r-0 border-[#ababab] px-[2px] text-black outline-none">
              <option>Tentative</option>
            </select>
            <ClearButton />
          </div>
          <span className="w-px bg-[#ababab]"></span>
          <DropButton />
          <LookupButton />
        </Row>
        <Row id="confirmation" label="Confirmation #:" labelWidth="w-[82px]">
          <input id="confirmation" readOnly defaultValue="LG00186" className={clsx(inputBase, GRAY)} />
        </Row>
        <Row id="adults" label="Adults:" labelWidth="w-[82px]">
          <NumberField id="adults" value={1} />
        </Row>
        <Row id="children" label="Children:" labelWidth="w-[82px]">
          <NumberField id="children" value={0} />
        </Row>
      </div>
    </div>
  </fieldset>
);

const BookingForm = () => (
  <div className="px-[5px] pt-[5px]">
    <PanelTabs tabs={TABS} active="Accommodation" />
    <div className="border border-[#ababab] pb-[5px] pl-1 pr-[5px] pt-[5px]">
      <div className="flex flex-col gap-[2px]">
        <Row id="event" label="Event:" labelWidth="w-[114px]">
          <input id="event" readOnly defaultValue="4047: Conference & Expo" className={clsx(inputBase, GRAY)} />
          <LookupButton />
        </Row>
        <Row id="contactType" label="Contact Type:" labelWidth="w-[114px]">
          <select id="contactType" className={clsx(inputBase, 'appearance-none')}>
            <option>Attendee</option>
          </select>
          <DropButton />
        </Row>
        <Row id="bookedBy" label="Booked By Attendee:" labelWidth="w-[114px]" required>
          <select id="bookedBy" className="h-5 w-full appearance-none border border-r-0 border-[#ababab] px-[2px] outline-none">
            <option>Nelson, Debra J</option>
          </select>
          <ClearButton />
          <span className="w-px bg-[#ababab]"></span>
          <DropButton />
        </Row>
      </div>
      <HotelRoom />
    </div>
  </div>
);

const ToolButton = ({ label, caret = false, children }) => (
  <button type="button" aria-label={label} className={clsx('flex h-6 shrink-0 items-center justify-center', caret ? 'w-[43px] gap-3' : 'w-[26px]')}>
    {children}
    {caret && <Caret />}
  </button>
);

const ToolDivider = () => <span className="mx-[2px] h-[22px] w-px shrink-0 bg-[#ababab]"></span>;

const Glyph = ({ className, children }) => (
  <span className={clsx("font-['Liberation_Serif',serif] font-bold", className)}>{children}</span>
);

const FontPicker = ({ label, value, className }) => (
  <div className={clsx('flex', className)}>
    <select aria-label={label} className="h-5 w-full appearance-none border border-[#ababab] px-[3px] outline-none">
      <option>{value}</option>
    </select>
    <DropButton />
  </div>
);

const NotesToolbar = () => (
  <div className="flex h-[29px] items-center border-b border-[#ababab] pl-[2px]">
    <ToolButton label="Save"><Icon name="disk" /></ToolButton>
    <ToolButton label="Edit in word processor"><Icon name="docA" /></ToolButton>
    <ToolButton label="Preview"><Icon name="preview" /></ToolButton>
    <ToolButton label="Open"><Icon name="openFile" /></ToolButton>
    <button type="button" aria-label="Signature" className="mr-[7px] flex h-6 w-8 shrink-0 items-center justify-center gap-[2px]">
      <Icon name="edit" />
      <Caret />
    </button>
    <FontPicker label="Font" value="Tahoma" className="mr-2 w-[128px]" />
    <FontPicker label="Font size" value="8" className="mr-[4px] w-[50px]" />
    <ToolButton label="Grow font">
      <span className="self-start pt-[5px] text-[6px] leading-[6px] text-[#2b3a58]">▲</span>
      <Glyph className="text-base text-[#1f4e8c]">A</Glyph>
    </ToolButton>
    <ToolButton label="Shrink font">
      <span className="self-start pt-[5px] text-[6px] leading-[6px] text-[#2b3a58]">▼</span>
      <Glyph className="text-sm text-[#1f4e8c]">A</Glyph>
    </ToolButton>
    <ToolButton label="Bold"><Glyph className="text-sm text-[#2b3a58]">B</Glyph></ToolButton>
    <ToolButton label="Italic"><Glyph className="text-sm italic text-[#2b3a58]">I</Glyph></ToolButton>
    <ToolButton label="Underline"><Glyph className="text-sm text-[#2b3a58] underline">U</Glyph></ToolButton>
    <ToolButton label="Double underline"><Glyph className="text-sm text-[#2b3a58] underline decoration-double">U</Glyph></ToolButton>
    <ToolButton label="Bullets"><Icon name="bullets" /></ToolButton>
    <ToolButton label="Numbering"><Icon name="numbers" /></ToolButton>
    <ToolButton label="Multilevel list"><Icon name="multilevel" /></ToolButton>
    <ToolButton label="Decrease indent"><Icon name="outdent" /></ToolButton>
    <ToolButton label="Increase indent"><Icon name="indent" /></ToolButton>
    <ToolDivider />
    <ToolButton label="Font color" caret>
      <Glyph className="w-[14px] border-b-[3px] border-black text-center text-sm leading-[13px] text-[#1f4e8c]">A</Glyph>
    </ToolButton>
    <ToolButton label="Highlight color" caret><Icon name="highlight" /></ToolButton>
    <button type="button" aria-label="Change case" className="flex h-6 w-[36px] shrink-0 items-center justify-center gap-1">
      <span className="font-['Liberation_Sans',sans-serif] text-[13px] font-bold text-[#3f72b4]">Aa</span>
      <Caret />
    </button>
    <ToolButton label="Clear formatting"><Icon name="clearFormat" /></ToolButton>
    <ToolButton label="Font"><Glyph className="text-base text-[#1f4e8c]">A</Glyph></ToolButton>
    <ToolDivider />
    <ToolButton label="Cut"><Icon name="cut" /></ToolButton>
    <ToolButton label="Copy"><Icon name="copy" /></ToolButton>
    <ToolButton label="Paste"><Icon name="paste" /></ToolButton>
    <ToolButton label="Paste special"><Icon name="pasteSpecial" /></ToolButton>
    <ToolDivider />
    <ToolButton label="Field codes"><Icon name="fieldCode" /></ToolButton>
    <ToolButton label="Field results"><Icon name="fieldText" /></ToolButton>
    <button type="button" aria-label="More commands" className="ml-auto mr-[3px]">
      <Chevron />
    </button>
  </div>
);

const BookingWindow = () => (
  <section className="mr-[109px] border border-b-0 border-[#0072c6] bg-white">
    <TitleBar title="Nelson, Debra J: Suite 1 Bedroom (1 King) 1/11/2022 1/13/2022  - Accommodation Booking (External)">
      <QuickButton name="rooms" label="Rooms" />
      <QuickButton name="refresh" label="Refresh" />
      <QuickButton name="page" label="New" />
      <QuickButton name="cubes" label="Related" />
      <QuickButton name="binoculars" label="Find" />
      <QuickButton name="info" label="Status" caret />
      <QuickButton name="undo" label="Undo" />
      <QuickButton name="cross" label="Delete" />
      <button type="button" aria-label="Customize toolbar" className="ml-[6px] flex w-[18px] justify-center">
        <CustomizeCaret />
      </button>
    </TitleBar>
    <RibbonTabs tabs={[{ name: 'Home', width: 'w-[53px]' }]} />
    <MainRibbon />
    <div className="flex h-[15px] items-center border border-[#6b6b5a] bg-[#ff8c00] text-white">
      <span className="h-px flex-1 bg-white"></span>
      <span className="tracking-[3px]">ROOM BLOCK ASSIGNED</span>
      <span className="h-px flex-1 bg-white"></span>
    </div>
    <BookingForm />
    <div className="px-[5px] pb-[5px] pt-[2px]">
      <div className="pl-px">
        <PanelTabs tabs={DETAIL_TABS} active="General Notes" tall />
      </div>
      <div className="border border-[#ababab] p-[2px]">
        <div className="border border-[#6b6b6b]">
          <NotesToolbar />
          <div className="flex h-[97px]">
            <div
              contentEditable
              suppressContentEditableWarning
              role="textbox"
              aria-label="General notes"
              className="flex flex-1 items-start pl-4 pt-[5px] text-black outline-none"
            >
              General Notes for Accommodation Booking
              <span className="h-[13px] w-px bg-black"></span>
            </div>
            <div className="flex w-[17px] justify-center bg-[#f0f0f0] pt-1">
              <Chevron dir="up" />
            </div>
          </div>
        </div>
      </div>
    </div>
    <footer className="h-6 bg-[#0072c6]"></footer>
  </section>
);

const range = (n) => Array.from({ length: n }, (_, i) => i);

// Horizontal ruler: 12px per eighth of an inch, origin at x=24
const HorizontalRuler = () => (
  <div className="h-[26px] flex-1 overflow-hidden border-b border-[#c4c4c4]">
    <svg width="672" height="26" viewBox="0 1 672 26" aria-hidden="true">
      <path d="M0 6.500h672M0 18.500h672" stroke="#dcdcdc" />
      <path d="M0 6h24v13H0z" fill="#e4e4e4" />
      <path d="M665 6h7v13h-7z" fill="#e4e4e4" />
      {range(56).map((i) => {
        const x = i * 12 + 0.5;
        const eighth = i - 2;
        if (eighth === 0 || (eighth > 0 && eighth % 8 === 0)) return null;
        const tall = eighth > 0 && eighth % 4 === 0;
        return <path key={i} d={tall ? `M${x} 10v6` : `M${x} 11v3`} stroke="#6a6a6a" />;
      })}
      {range(13).map((i) => (
        <path key={i} d={`M${72.5 + i * 48} 20v3`} stroke="#8a8a8a" />
      ))}
      {range(6).map((i) => (
        <text
          key={i}
          x={119 + i * 96}
          y="16"
          textAnchor="middle"
          fontSize="9"
          fontFamily="Liberation Sans, sans-serif"
          fill={i === 0 ? '#4a90d9' : '#555'}
        >
          {i + 1}
        </text>
      ))}
      <path d="M19.500 4.500h8v3l-4 4-4-4zM19.500 17.500v-2l4-4 4 4v2z" fill="#fff" stroke="#777" />
      <path d="M19.500 17.500h8v6h-8z" fill="#fff" stroke="#777" />
      <path d="M665.500 18.500v-3l5-4.500v7.500z" fill="#fff" stroke="#777" />
    </svg>
  </div>
);

const VerticalRuler = () => (
  <svg width="13" height="178" viewBox="0 0 13 178" className="block" aria-hidden="true">
    <path d="M.5 77V178M12.500 77V178" stroke="#dcdcdc" />
    <path d="M0 0h13v77H0z" fill="#e4e4e4" />
    {range(14).map((i) => {
      const y = i * 12 + 4.5;
      if (i === 6) return null;
      return <path key={i} d={i % 8 === 2 ? `M4 ${y}h6` : `M5 ${y}h3`} stroke="#6a6a6a" />;
    })}
    <rect x="2" y="73.500" width="7" height="3" rx="1.500" fill="#fff" stroke="#6d93b5" />
    <path d="M2 171.500h8M3 171l2-2" stroke="#777" />
  </svg>
);

const FIELDS = [
  { name: 'Fully Invoiced' },
  { name: 'General Notes' },
  { name: 'Home Phone' },
  { name: 'Hotel', children: true },
  { name: 'Income Account Description' },
  { name: 'Income Account Group Code' },
  { name: 'Income Account Group Description' },
  { name: 'Income Account Item Code' },
  { name: 'Income Budget Category Code' },
  { name: 'Income Budget Category Description' },
  { name: 'Income Budget Item', children: true },
];

const FieldList = () => (
  <aside className="flex w-[337px] shrink-0 flex-col border-l-2 border-[#ababab]">
    <div className="flex h-[25px] items-center pl-[13px] pr-[13px]">
      <h2 className="flex-1">Accommodation Booking (External)</h2>
      <button type="button" aria-label="Pin panel" className="mr-[10px]">
        <svg width="9" height="9" viewBox="0 0 9 9" fill="none" stroke="#6a6a6a" aria-hidden="true">
          <path d="M2.500.5h4v5h-4zM1 5.500h7M4.500 6v3M5.500 1v4" />
        </svg>
      </button>
      <button type="button" aria-label="Close panel">
        <svg width="9" height="8" viewBox="0 0 9 8" stroke="#6a6a6a" strokeWidth="1.700" aria-hidden="true">
          <path d="M.5 0l8 8M8.500 0l-8 8" />
        </svg>
      </button>
    </div>
    <div className="flex h-[198px] border border-l-0 border-[#ababab]">
      <ul className="flex-1 overflow-hidden">
        {FIELDS.map((field) => (
          <li key={field.name} className="flex h-[18px] items-center whitespace-nowrap">
            <span className="flex w-[22px] justify-center">
              {field.children && (
                <svg width="4" height="7" viewBox="0 0 4 7" className="fill-[#777]" aria-hidden="true">
                  <path d="M0 0l4 3.500L0 7z" />
                </svg>
              )}
            </span>
            {field.name}
          </li>
        ))}
      </ul>
      <div className="flex w-[17px] flex-col items-center bg-[#f0f0f0] py-1">
        <Chevron dir="up" />
        <span className="mt-[68px] h-[17px] w-full bg-[#cdcdcd]"></span>
        <span className="flex-1"></span>
        <Chevron />
      </div>
    </div>
  </aside>
);

const WORD_TABS = [
  { name: 'File', width: 'w-[42px]' },
  { name: 'Home', width: 'w-[51px]' },
  { name: 'Insert', width: 'w-[57px]' },
  { name: 'Page Layout', width: 'w-[84px]' },
  { name: 'Mail Merge', width: 'w-[80px]' },
  { name: 'View', width: 'w-[46px]' },
  { name: 'Review', width: 'w-[62px]' },
  { name: 'References', width: 'w-[80px]' },
];

const WordWindow = () => (
  <section className="absolute left-[409px] right-0 top-[532px] border border-b-0 border-[#0072c6] bg-white">
    <TitleBar title="Word Processor">
      <QuickButton name="squares" label="Word processor" />
      <QuickButton name="disk" label="Save" />
      <QuickButton name="diskPage" label="Save as" />
      <button type="button" aria-label="Customize toolbar" className="ml-[6px] flex w-[18px] justify-center">
        <CustomizeCaret />
      </button>
    </TitleBar>
    <RibbonTabs tabs={WORD_TABS} />
    <WordRibbon />
    <div className="flex">
      <div className="flex min-w-0 flex-1 flex-col border border-r-0 border-[#ababab]">
        <div className="flex">
          <div className="min-w-0 flex-1">
            <div className="flex pl-[5px]">
              <div className="mr-[5px] mt-[5px] flex size-[13px] items-center justify-center border border-[#c4c4c4]">
                <span className="size-[5px] border-b-2 border-l-2 border-[#555]"></span>
              </div>
              <HorizontalRuler />
            </div>
            <div className="flex pl-[5px]">
              <VerticalRuler />
              <div
                contentEditable
                suppressContentEditableWarning
                role="textbox"
                aria-label="Document"
                className="flex-1 pl-[28px] pt-[75px] text-black outline-none"
              >
                General Notes for Accommodation Booking
              </div>
            </div>
          </div>
          <div className="flex w-[17px] flex-col items-center bg-[#f0f0f0] py-1">
            <Chevron dir="up" />
            <span className="mt-[5px] h-[29px] w-full bg-[#cdcdcd]"></span>
            <span className="flex-1"></span>
            <Chevron />
          </div>
        </div>
        <div className="mr-[17px] flex h-[17px] items-center bg-[#f0f0f0] px-1">
          <Chevron dir="left" />
          <span className="w-[57px]"></span>
          <span className="h-full flex-1 bg-[#cdcdcd]"></span>
          <span className="w-[70px]"></span>
          <Chevron dir="right" />
        </div>
      </div>
      <FieldList />
    </div>
    <footer className="flex h-6 items-end justify-end bg-[#0072c6] p-[2px]">
      <svg width="8" height="8" viewBox="0 0 8 8" className="fill-[#9cc7e8]" aria-hidden="true">
        <path d="M6 0h2v2H6zM3 3h2v2H3zM6 3h2v2H6zM0 6h2v2H0zM3 6h2v2H3zM6 6h2v2H6z" />
      </svg>
    </footer>
  </section>
);

const RedArrow = ({ className }) => (
  <svg width="106" height="84" viewBox="0 0 106 84" className={clsx('pointer-events-none absolute z-20', className)} aria-hidden="true">
    <path d="M22 64L103 3" stroke="#f00" strokeWidth="7" />
    <path d="M1 81l15.500-25L30 72z" fill="#f00" stroke="#f00" />
  </svg>
);

const App = () => {
  return (
    <main className="relative min-h-screen overflow-hidden bg-white font-['DejaVu_Sans_Condensed','DejaVu_Sans',sans-serif] text-[11px] leading-[13px] text-[#3b3b3b]">
      <Defs />
      <BookingWindow />
      <WordWindow />
      <RedArrow className="left-[60px] top-[430px]" />
      <RedArrow className="left-[698px] top-[393px]" />
    </main>
  );
};

export default App;
